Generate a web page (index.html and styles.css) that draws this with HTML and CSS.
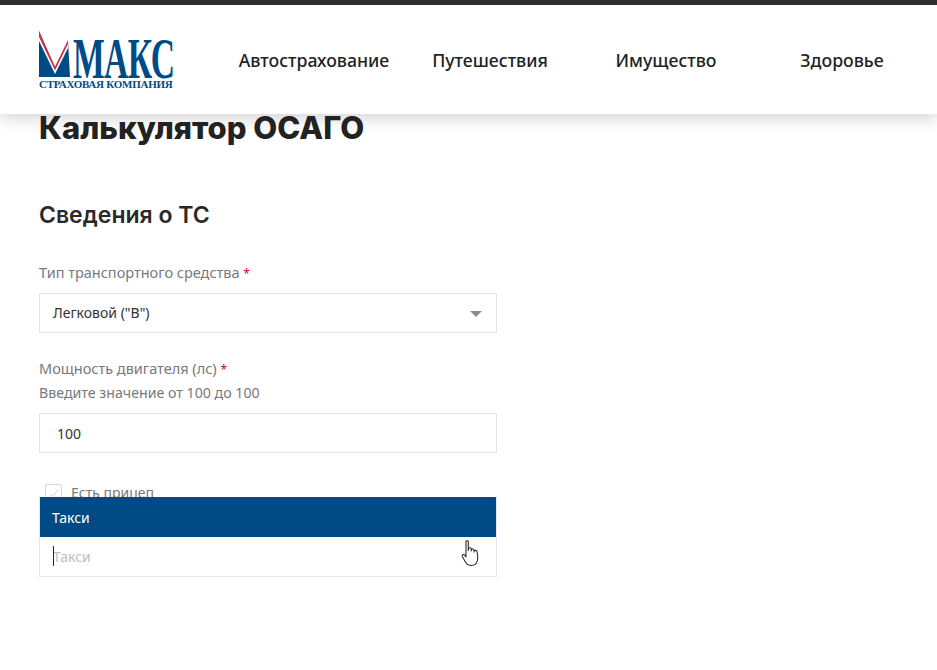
FILE: index.html
```html
<!DOCTYPE html>
<html lang="ru">
<head>
    <meta charset="UTF-8">
    <meta name="viewport" content="width=device-width, initial-scale=1.0">
    <title>Калькулятор ОСАГО</title>
    <link rel="stylesheet" href="styles.css">
</head>
<body>
    <!-- Header -->
    <header class="site-header">
        <a href="#" class="logo">
            <svg class="logo-mark" width="31" height="46" viewBox="0 0 31 46">
                <path d="M0 0L16 37L29 10L31 46H0Z" fill="#004a86"/>
                <path d="M0 3L16 37L29 10V17L16 43L0 10Z" fill="#ffffff"/>
                <path d="M0 0L16 35.500L29 9V13L16 39.500L0 6Z" fill="#c8324a"/>
            </svg>
            <span class="logo-name">МАКС</span>
            <span class="logo-sub">СТРАХОВАЯ КОМПАНИЯ</span>
        </a>
        <nav class="main-nav">
            <a href="#">Автострахование</a>
            <a href="#">Путешествия</a>
            <a href="#">Имущество</a>
            <a href="#">Здоровье</a>
        </nav>
    </header>

    <!-- Calculator -->
    <main class="calc">
        <h1>Калькулятор ОСАГО</h1>
        <h2>Сведения о ТС</h2>

        <div class="field">
            <label>Тип транспортного средства <span class="req">*</span></label>
            <div class="input select-input">
                Легковой ("B")
                <span class="arrow"></span>
            </div>
        </div>

        <div class="field field-power">
            <label>Мощность двигателя (лс) <span class="req">*</span></label>
            <p class="hint">Введите значение от 100 до 100</p>
            <div class="input power-input">100</div>
        </div>

        <div class="option-wrap">
            <div class="check-row">
                <span class="checkbox">
                    <svg width="12" height="12" viewBox="0 0 12 12"><path d="M2 6.500L5 9.500L10 2.500" fill="none" stroke="#e4e8e8" stroke-width="1.500"/></svg>
                </span>
                <span class="check-label">Есть прицеп</span>
            </div>
            <div class="dropdown">
                <div class="dropdown-item">Такси</div>
                <div class="dropdown-search">
                    <span class="caret"></span>
                    <span class="placeholder">Такси</span>
                    <svg class="hand" width="20" height="27" viewBox="0 0 20 27">
                        <path d="M5 1.500C5 .5 7.300 .5 7.300 1.500V10.500L7.500 8.500C8 7.500 10 7.500 10.200 9V11L10.400 9.500C11 8.500 12.800 8.800 13 10V12L13.300 10.800C14 10 15.800 10.300 16 11.500C16.800 15 17 18 16.500 20C16 22.500 14.500 25.500 10.500 25.500C7 25.500 5.500 24 4.500 22L1.500 17C.5 15 2.500 13.800 3.800 15.200L5 17Z" fill="#ffffff" stroke="#2b2b2b" stroke-width="1.100" stroke-linejoin="round"/>
                    </svg>
                </div>
            </div>
        </div>
    </main>
</body>
</html>
```

FILE: styles.css
```css
* {
    margin: 0;
    padding: 0;
    box-sizing: border-box;
}

body {
    height: 670px;
    overflow: hidden;
    background: #ffffff;
    color: #222222;
    font-family: 'Noto Sans', 'Open Sans', sans-serif;
}

/* Header */
.site-header {
    display: flex;
    align-items: center;
    height: 114px;
    padding: 0 8px 0 39px;
    background: #ffffff;
    border-top: 5px solid #2e2e2e;
    box-shadow: 0 4px 16px rgba(0,0,0,0.18);
}

.logo {
    position: relative;
    display: block;
    flex: none;
    width: 135px;
    height: 60px;
    margin-top: 3px;
    color: #004a86;
    text-decoration: none;
}

.logo-mark {
    position: absolute;
    left: 0;
    top: 0;
}

.logo-name {
    position: absolute;
    left: 34px;
    top: 7px;
    font-family: 'Liberation Serif', serif;
    font-size: 56px;
    font-weight: 700;
    line-height: 42px;
    letter-spacing: -1px;
    transform: scaleX(0.6);
    transform-origin: left top;
}

.logo-sub {
    position: absolute;
    left: 0;
    bottom: 3px;
    font-family: 'Liberation Serif', serif;
    font-size: 11px;
    font-weight: 700;
    line-height: 8px;
    letter-spacing: -0.250px;
    white-space: nowrap;
}

.main-nav {
    display: grid;
    grid-template-columns: repeat(4, 176px);
    margin-left: 52px;
}

.main-nav a {
    color: #222222;
    font-size: 17.700px;
    font-weight: 500;
    text-align: center;
    text-decoration: none;
}

/* Calculator */
.calc {
    width: 497px;
    padding-left: 39px;
}

h1 {
    font-family: 'Inter', sans-serif;
    font-size: 31px;
    font-weight: 800;
    line-height: 28px;
    color: #222222;
}

h2 {
    margin-top: 58px;
    font-family: 'Inter', sans-serif;
    font-size: 23px;
    font-weight: 600;
    line-height: 30px;
    color: #2a2a2a;
}

.field {
    margin-top: 30px;
}

.field label {
    display: block;
    height: 24px;
    color: #77797c;
    font-size: 14.500px;
    line-height: 24px;
}

.hint {
    color: #77797c;
    font-size: 14.200px;
    line-height: 24px;
}

.req {
    color: #d0021b;
    font-size: 12px;
}

.input {
    position: relative;
    height: 40px;
    margin-top: 8px;
    padding-left: 13px;
    border: 1px solid #e3e3e3;
    color: #333333;
    font-size: 14px;
    line-height: 38px;
}

.select-input {
    margin-top: 9px;
}

.select-input .arrow {
    position: absolute;
    right: 14px;
    top: 17px;
    border-left: 6px solid transparent;
    border-right: 6px solid transparent;
    border-top: 6px solid #8a8a8a;
}

.field-power {
    margin-top: 23px;
}

.field-power label {
    margin-bottom: 1px;
}

.field-power .input {
    padding-left: 17px;
    line-height: 40px;
}

/* Dropdown lies over the checkbox row */
.option-wrap {
    position: relative;
    margin-top: 31px;
    height: 93px;
}

.check-row {
    display: flex;
    align-items: center;
    gap: 9px;
    padding-left: 6px;
    color: #77797c;
    font-size: 14px;
    line-height: 16px;
}

.checkbox {
    display: flex;
    align-items: center;
    justify-content: center;
    width: 17px;
    height: 17px;
    border: 1px solid #d8d8d8;
    border-radius: 2px;
}

.dropdown {
    position: absolute;
    left: 0;
    right: 0;
    top: 13px;
    border: 1px solid #e6e6e6;
    border-top: none;
    background: #ffffff;
}

.dropdown-item {
    height: 40px;
    padding-left: 12px;
    background: #004a86;
    color: #ffffff;
    font-size: 14px;
    line-height: 42px;
}

.dropdown-search {
    position: relative;
    height: 39px;
    padding-left: 13px;
    font-size: 14px;
    line-height: 39px;
}

.placeholder {
    color: #b9bec2;
}

.caret {
    position: absolute;
    left: 13px;
    top: 9px;
    width: 1px;
    height: 20px;
    background: #222222;
}

.hand {
    position: absolute;
    left: 421px;
    top: 3px;
}
```
